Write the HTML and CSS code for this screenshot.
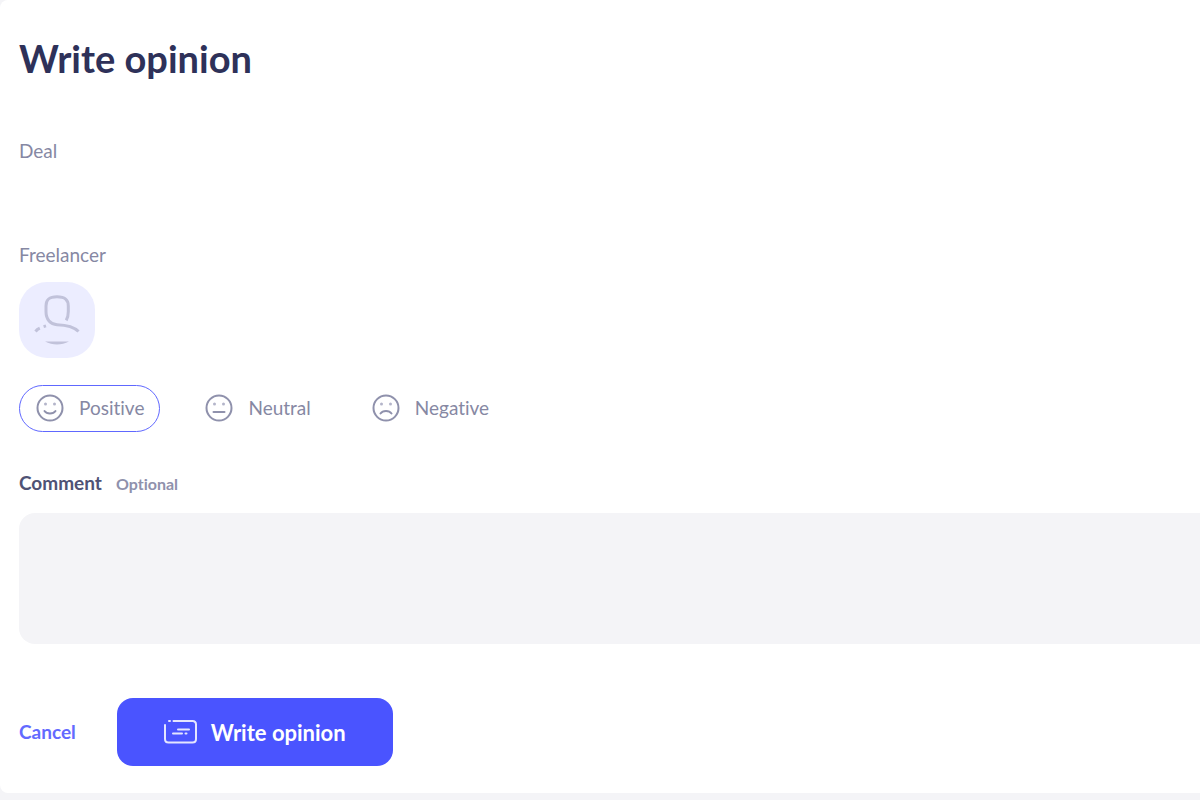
FILE: index.html
```html
<!DOCTYPE html>
<html lang="en">
<head>
    <meta charset="UTF-8">
    <meta name="viewport" content="width=device-width, initial-scale=1.0">
    <title>Write opinion</title>

    <link rel="stylesheet" href="styles.css">
</head>
<body>

<main class="card">
    <h1>Write opinion</h1>

    <div class="deal">
        <div class="label">Deal</div>
    </div>

    <div class="freelancer">
        <div class="label">Freelancer</div>
        <div class="avatar">
            <svg width="76" height="76" viewBox="0 0 76 76" fill="none" stroke="#c1c2da" stroke-width="3">
                <path d="M47.2 38.4C48.8 35.8 49.3 33 49.3 29.5V24C49.3 17.5 46 14.8 38 14.8S27 17.5 27 24V29.500C27 37.500 31.500 42.500 38 42.700C46.500 43 55 44.800 59.500 49.500"/>
                <path d="M16.500 49.500C17.500 48.200 19 47 20.800 46.200M24.600 44.600L27 43.900"/>
                <path d="M26 59.600H50C42.500 63.400 33.500 63.400 26 59.600Z" fill="#c1c2da" stroke="none"/>
            </svg>
        </div>
    </div>

    <form>
        <div class="ratings">
            <input type="radio" name="rating" id="positive" value="positive" checked>
            <label for="positive">
                <svg width="28" height="28" viewBox="0 0 28 28" fill="none" stroke="#8f91ac" stroke-width="2" stroke-linecap="round">
                    <circle cx="14" cy="14" r="12.500"/>
                    <path d="M8.500 17C10.800 20.300 17.200 20.300 19.500 17"/>
                    <g fill="#b4b5ca" stroke="none"><circle cx="9.500" cy="10" r="1.500"/><circle cx="18.500" cy="10" r="1.500"/></g>
                </svg>
                Positive
            </label>

            <input type="radio" name="rating" id="neutral" value="neutral">
            <label for="neutral">
                <svg width="28" height="28" viewBox="0 0 28 28" fill="none" stroke="#8f91ac" stroke-width="2" stroke-linecap="round">
                    <circle cx="14" cy="14" r="12.500"/>
                    <path d="M8.500 18H19.500"/>
                    <g fill="#b4b5ca" stroke="none"><circle cx="9.500" cy="10" r="1.500"/><circle cx="18.500" cy="10" r="1.500"/></g>
                </svg>
                Neutral
            </label>

            <input type="radio" name="rating" id="negative" value="negative">
            <label for="negative">
                <svg width="28" height="28" viewBox="0 0 28 28" fill="none" stroke="#8f91ac" stroke-width="2" stroke-linecap="round">
                    <circle cx="14" cy="14" r="12.500"/>
                    <path d="M8.500 19.500C10.800 16.200 17.200 16.200 19.500 19.500"/>
                    <g fill="#b4b5ca" stroke="none"><circle cx="9.500" cy="10" r="1.500"/><circle cx="18.500" cy="10" r="1.500"/></g>
                </svg>
                Negative
            </label>
        </div>

        <label class="comment-label" for="comment">Comment <span class="optional">Optional</span></label>
        <textarea id="comment"></textarea>

        <div class="actions">
            <a href="#" class="cancel-link">Cancel</a>
            <button type="button" class="submit-button">
                <svg width="34" height="26" viewBox="0 0 34 26" fill="none" stroke="#e4e5ff" stroke-width="2" stroke-linecap="round">
                    <path d="M9.500 2H28.500Q32 2 32 5.500V20Q32 23.500 28.500 23.500H4.500Q1 23.500 1 20V6M5 2H6"/>
                    <path d="M14 10.500H25M9 14.500H18M21.500 14.500H22.500"/>
                </svg>
                Write opinion
            </button>
        </div>
    </form>
</main>

</body>
</html>
```
FILE: styles.css
```css
body {
    margin: 0;
    background-color: #f4f4f7;
    font-family: Lato, sans-serif;
    font-size: 19px;
    line-height: 24px;
    font-variant-ligatures: none;
    color: #8688a3;
}

.card {
    padding: 35px 0 27px 19px;
    background-color: #fff;
    border-radius: 8px 0 0 8px;
}

h1 {
    margin: 0 0 58px;
    font-size: 38px;
    line-height: 46px;
    color: #2e3159;
}

.deal {
    min-height: 104px;
}

.avatar {
    width: 76px;
    height: 76px;
    margin-top: 15px;
    border-radius: 28px;
    background-color: #ecedff;
}

.avatar svg {
    display: block;
}

.ratings {
    display: flex;
    gap: 28px;
    margin: 27px 0 39px;
}

.ratings input {
    position: absolute;
    opacity: 0;
}

.ratings label {
    display: flex;
    align-items: center;
    box-sizing: border-box;
    gap: 15px;
    height: 47px;
    padding: 0 15px 1px 16px;
    border: 1px solid transparent;
    border-radius: 24px;
    cursor: pointer;
}

.ratings input:checked + label {
    border-color: #6068ff;
}

.comment-label {
    display: flex;
    align-items: baseline;
    gap: 14px;
    font-weight: bold;
    color: #4f5275;
}

.optional {
    font-size: 16px;
    color: #8f91ac;
}

textarea {
    display: block;
    box-sizing: border-box;
    width: 100%;
    height: 131px;
    margin: 17px 0 54px;
    padding: 16px;
    border: none;
    border-radius: 16px 0 0 16px;
    background-color: #f4f4f7;
    font: inherit;
    resize: none;
}

.actions {
    display: flex;
    align-items: center;
    gap: 41px;
}

.cancel-link {
    font-weight: bold;
    color: #636aff;
    text-decoration: none;
}

.submit-button {
    display: flex;
    align-items: center;
    gap: 13px;
    height: 68px;
    padding: 0 47px;
    border: none;
    border-radius: 16px;
    background-color: #4a54ff;
    font-family: inherit;
    font-size: 22px;
    font-weight: bold;
    color: #fff;
    cursor: pointer;
}
```
